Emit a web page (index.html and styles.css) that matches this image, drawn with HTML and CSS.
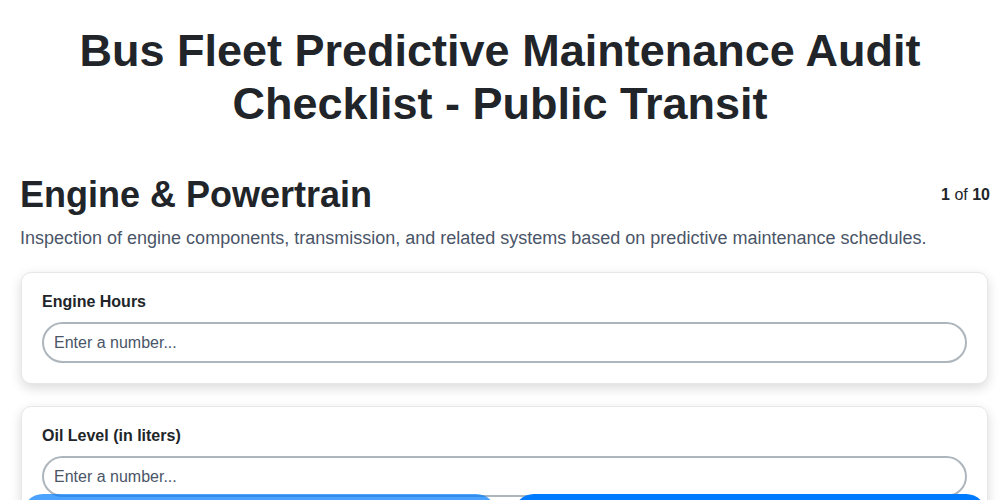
FILE: index.html
```html
<!DOCTYPE html>
<html lang="en">
<head>
    <meta charset="UTF-8">
    <meta name="viewport" content="width=device-width, initial-scale=1.0">
    <title>Bus Fleet Predictive Maintenance Audit Checklist</title>
    <link rel="stylesheet" href="styles.css">
</head>
<body>
    <h1 class="page-title">Bus Fleet Predictive Maintenance Audit Checklist - Public Transit</h1>

    <div class="section">
        <div class="section-header">
            <h2 class="section-title">Engine &amp; Powertrain</h2>
            <div class="step-count"><b>1</b> of <b>10</b></div>
        </div>
        <p class="section-desc">Inspection of engine components, transmission, and related systems based on predictive maintenance schedules.</p>

        <div class="card">
            <label class="field-label" for="engineHours">Engine Hours</label>
            <input type="number" id="engineHours" class="field-input" placeholder="Enter a number...">
        </div>

        <div class="card">
            <label class="field-label" for="oilLevel">Oil Level (in liters)</label>
            <input type="number" id="oilLevel" class="field-input" placeholder="Enter a number...">
        </div>
    </div>

    <div class="nav-bar">
        <button class="btn btn-prev" disabled>Previous</button>
        <button class="btn btn-next">Next</button>
    </div>
</body>
</html>
```

FILE: styles.css
```css
body {
    margin: 0;
    font-family: "Liberation Sans", Arial, sans-serif;
    color: #212529;
    background: #fff;
}

.page-title {
    text-align: center;
    font-size: 45px;
    line-height: 53px;
    margin: 24px 40px 40px;
}

.section {
    padding: 0 10px 0 20px;
}

.section-header {
    display: flex;
    justify-content: space-between;
    align-items: center;
    padding-top: 4px;
}

.section-title {
    font-size: 36px;
    margin: 0;
}

.step-count {
    font-size: 16px;
}

.section-desc {
    color: #4a5568;
    font-size: 18px;
    margin: 12px 0 23px;
}

.card {
    background: #fff;
    border: 1px solid #e5e7eb;
    border-radius: 10px;
    box-shadow: 0 4px 12px rgba(0, 0, 0, 0.15);
    padding: 20px;
    margin: 0 2px 22px 1px;
}

.field-label {
    display: block;
    font-weight: bold;
    font-size: 16px;
    margin-bottom: 11px;
}

.field-input {
    display: block;
    box-sizing: border-box;
    width: 100%;
    height: 41px;
    padding: 0 10px;
    border: 2px solid #adb5bd;
    border-radius: 21px;
    font-family: inherit;
    font-size: 16px;
    color: #212529;
    -moz-appearance: textfield;
}

.field-input::placeholder {
    color: #4a5568;
}

.field-input::-webkit-outer-spin-button,
.field-input::-webkit-inner-spin-button {
    -webkit-appearance: none;
    margin: 0;
}

.nav-bar {
    position: fixed;
    left: 22px;
    right: 13px;
    bottom: -36px;
    display: flex;
    gap: 16px;
}

.btn {
    flex: 1;
    height: 42px;
    padding-top: 14px;
    border: none;
    border-radius: 21px;
    color: #fff;
    font-size: 16px;
    font-family: inherit;
    background-color: #007bff;
}

.btn-prev:disabled {
    opacity: 0.7;
}
```
